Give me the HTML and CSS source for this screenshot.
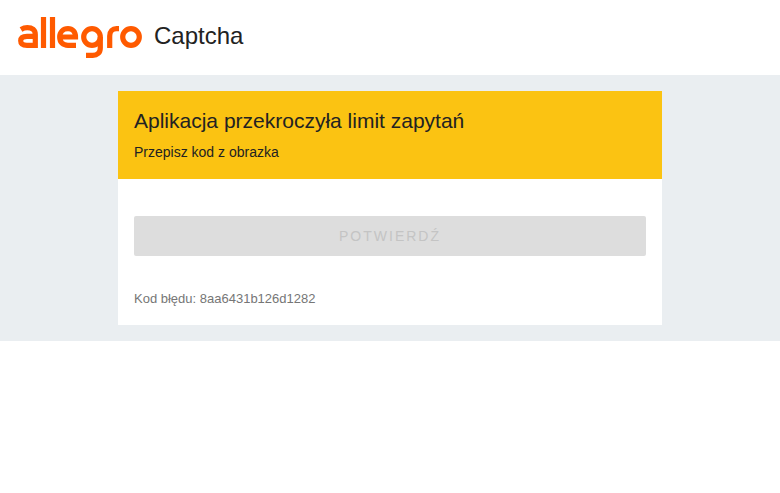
FILE: index.html
```html
<!DOCTYPE html>
<html lang="pl">
<head>
<meta charset="utf-8">
<title>Captcha</title>
<link rel="stylesheet" href="styles.css">
</head>
<body>
<header class="top">
  <svg class="logo" viewBox="0 0 124 42" width="124" height="42" aria-label="allegro">
    <g fill="none" stroke="#ff5a00" stroke-width="5.2">
      <path d="M3 13.500c2-1.200 4-1.800 6.300-1.800 5 0 8 2.200 8 6.800v10.800H9c-4.500 0-6.300-1.700-6.300-4.500s2-4.500 6.300-4.500h8.300"/>
      <path d="M25.500 1v31"/>
      <path d="M34.500 1v31"/>
      <path d="M41.700 21H57.500C57.500 15.500 54.500 12.700 50 12.700c-5 0-8.300 3.300-8.300 8.300 0 5.500 3.300 8.300 8.300 8.300h8"/>
      <circle cx="74" cy="21" r="8.300"/>
      <path d="M82.300 21v11c0 4.800-3 7.300-7.500 7.300H68"/>
      <path d="M91.700 32V20c0-5 2.800-7.300 6.800-7.300h2.500"/>
      <circle cx="113" cy="21" r="8.300"/>
    </g>
  </svg>
  <span class="app-name">Captcha</span>
</header>
<main class="band">
  <section class="card">
    <div class="notice">
      <h1 class="notice-title">Aplikacja przekroczyła limit zapytań</h1>
      <p class="notice-text">Przepisz kod z obrazka</p>
    </div>
    <div class="body">
      <button class="confirm" disabled>POTWIERDŹ</button>
      <p class="error-code">Kod błędu: 8aa6431b126d1282</p>
    </div>
  </section>
</main>
</body>
</html>
```

FILE: styles.css
```css
* { box-sizing: border-box; }
html, body { margin: 0; padding: 0; background: #fff; }
body { font-family: "Liberation Sans", Arial, sans-serif; color: #222; }
.top { height: 75px; display: flex; align-items: flex-start; padding: 16px 0 0 18px; gap: 12px; }
.logo { display: block; }
.app-name { font-size: 24px; line-height: 30px; margin-top: 5px; color: #222; }
.band { background: #eaeef1; padding: 16px 0; display: flex; justify-content: center; }
.card { width: 544px; background: #fff; }
.notice { background: #fbc312; height: 88px; padding: 16px 16px 0; }
.notice-title { margin: 0; font-size: 21px; line-height: 28px; font-weight: 400; color: #222; }
.notice-text { margin: 8px 0 0; font-size: 14px; line-height: 18px; color: #222; }
.body { padding: 37px 16px 0; height: 146px; }
.confirm { display: block; width: 100%; height: 40px; border: 0; border-radius: 2px; background: #ddd; color: #c4c4c4; font-family: inherit; font-size: 14px; letter-spacing: 2px; }
.error-code { margin: 34px 0 0; font-size: 13px; line-height: 18px; color: #767676; }
```
